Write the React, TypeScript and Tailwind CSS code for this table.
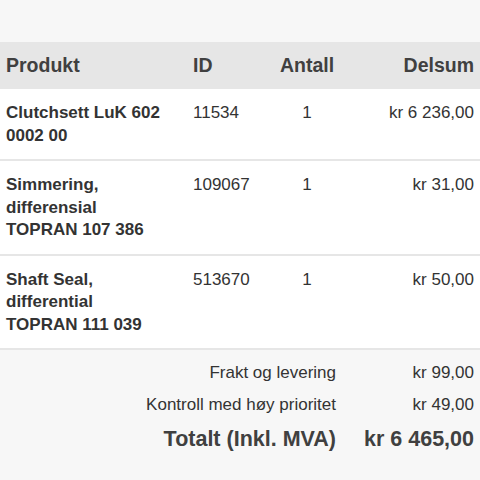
export default function App() {
  const rows = [
    { name: "Clutchsett LuK 602 0002 00", id: "11534", qty: "1", sum: "kr 6 236,00" },
    { name: "Simmering, differensial TOPRAN 107 386", id: "109067", qty: "1", sum: "kr 31,00" },
    { name: "Shaft Seal, differential TOPRAN 111 039", id: "513670", qty: "1", sum: "kr 50,00" },
  ];
  return (
    <div
      className="w-[480px] h-[480px] bg-[#f7f7f7] text-[#333333] overflow-hidden"
      style={{ fontFamily: '"Liberation Sans", Arial, sans-serif' }}
    >
      <div className="h-[42px]" />
      <div className="grid grid-cols-[187px_80px_80px_1fr] h-[47px] items-center bg-[#e6e6e6] text-[19.5px] font-bold text-[#404040]">
        <div className="pl-[6px]">Produkt</div>
        <div className="pl-[6px]">ID</div>
        <div className="text-center">Antall</div>
        <div className="text-right pr-[6px]">Delsum</div>
      </div>
      {rows.map((r) => (
        <div
          key={r.id}
          className="grid grid-cols-[187px_80px_80px_1fr] bg-white pt-[13px] pb-[12px] border-b-2 border-[#e6e6e6] text-[17px] leading-[22.5px]"
        >
          <div className="pl-[6px] pr-[22px] font-bold">{r.name}</div>
          <div className="pl-[6px]">{r.id}</div>
          <div className="text-center">{r.qty}</div>
          <div className="text-right pr-[6px]">{r.sum}</div>
        </div>
      ))}
      <div className="pt-[7px] flex flex-col items-end text-[17px]">
        <div className="flex h-[32px] items-center">
          <div className="text-right">Frakt og levering</div>
          <div className="w-[144px] pr-[6px] text-right">kr 99,00</div>
        </div>
        <div className="flex h-[32px] items-center">
          <div className="text-right">Kontroll med høy prioritet</div>
          <div className="w-[144px] pr-[6px] text-right">kr 49,00</div>
        </div>
        <div className="flex h-[36px] items-center font-bold text-[21.5px] text-[#404040]">
          <div className="text-right">Totalt (Inkl. MVA)</div>
          <div className="w-[144px] pr-[6px] text-right">kr 6 465,00</div>
        </div>
      </div>
    </div>
  );
}
